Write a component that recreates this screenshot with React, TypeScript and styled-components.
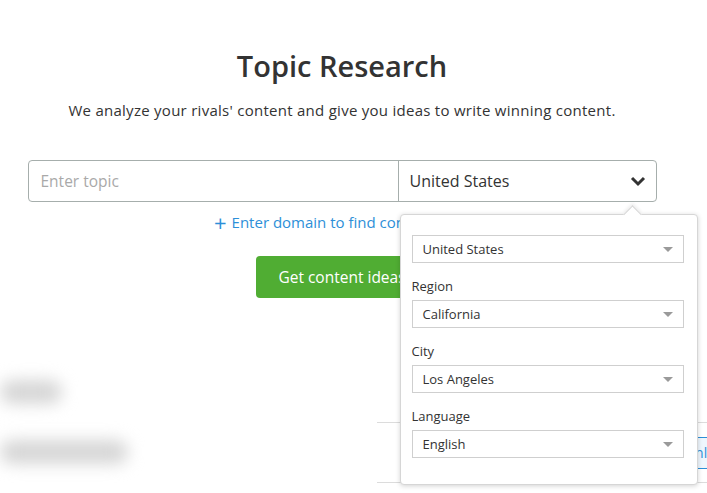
import React from "react";
import styled, { createGlobalStyle } from "styled-components";

const Global = createGlobalStyle`
  html, body { margin: 0; padding: 0; background: #fff; overflow: hidden; }
  body { font-family: "Open Sans", "Noto Sans", Arial, sans-serif; color: #333; }
  * { box-sizing: border-box; }
`;

const Page = styled.div`
  width: 707px;
  height: 493px;
  position: relative;
  overflow: hidden;
`;

const Column = styled.div`
  width: 684px;
  display: flex;
  flex-direction: column;
  align-items: center;
  padding-top: 46px;
`;

const Title = styled.h1`
  margin: 0;
  font-size: 29px;
  line-height: 40px;
  font-weight: 600;
  color: #333;
`;

const Subtitle = styled.p`
  margin: 14px 0 0;
  font-size: 15px;
  line-height: 20px;
  letter-spacing: 0.27px;
  color: #333;
`;

const Group = styled.div`
  margin-top: 40px;
  width: 629px;
  height: 42px;
  display: flex;
  border: 1px solid #a6aeac;
  border-radius: 4px;
  position: relative;
`;

const TopicInput = styled.div`
  flex: 0 0 370px;
  border-right: 1px solid #a6aeac;
  display: flex;
  align-items: center;
  padding-left: 12px;
  font-size: 15.5px;
  color: #a9a9a9;
`;

const CountrySelect = styled.div`
  flex: 1;
  display: flex;
  align-items: center;
  justify-content: space-between;
  padding: 0 10px 0 11px;
  font-size: 16px;
  color: #333;
`;

const Link = styled.div`
  margin-top: 10px;
  font-size: 15px;
  line-height: 20px;
  color: #2d8fd8;
  display: flex;
  align-items: center;
  gap: 5px;
`;

const Plus = styled.span`
  font-size: 22px;
  line-height: 20px;
  font-weight: 400;
`;

const GreenButton = styled.button`
  margin-top: 24px;
  height: 42px;
  padding: 0 22px;
  border: none;
  border-radius: 4px;
  background: #50ad33;
  color: #fff;
  font-family: inherit;
  font-size: 15.5px;
`;

const Results = styled.div`
  margin-top: 72px;
  display: flex;
  justify-content: space-between;
  align-items: flex-start;
`;

const BlurList = styled.div`
  display: flex;
  flex-direction: column;
  gap: 36px;
  padding-top: 10px;
`;

const BlurLine = styled.div<{ $w: number }>`
  width: ${(p) => p.$w}px;
  height: 24px;
  border-radius: 12px;
  background: #d6d6d6;
  filter: blur(8px);
`;

const Toolbar = styled.div`
  width: 330px;
  margin-top: 52px;
  height: 61px;
  border-top: 1px solid #dcdcdc;
  border-bottom: 1px solid #dcdcdc;
  display: flex;
  justify-content: flex-end;
  align-items: center;
  overflow: hidden;
`;

const GhostButton = styled.div`
  flex: 0 0 auto;
  margin-right: -38px;
  height: 32px;
  padding: 0 12px;
  display: flex;
  align-items: center;
  border: 1px solid #2d8fd8;
  background: #eef6fd;
  color: #2d8fd8;
  font-size: 14px;
`;

const Popover = styled.div`
  position: absolute;
  top: 53px;
  right: -42px;
  width: 298px;
  background: #fff;
  border: 1px solid #d6d6d6;
  border-radius: 4px;
  box-shadow: 0 1px 5px rgba(0, 0, 0, 0.18);
  padding: 20px 13px 26px 11px;
  display: flex;
  flex-direction: column;
  z-index: 5;
`;

const Arrow = styled.div`
  position: absolute;
  top: -7px;
  right: 58px;
  width: 13px;
  height: 13px;
  background: #fff;
  border-left: 1px solid #d6d6d6;
  border-top: 1px solid #d6d6d6;
  transform: rotate(45deg);
  box-shadow: -2px -2px 3px rgba(0, 0, 0, 0.06);
`;

const Field = styled.div<{ $first?: boolean }>`
  display: flex;
  flex-direction: column;
  margin-top: ${(p) => (p.$first ? 0 : 15)}px;
`;

const Label = styled.label`
  font-size: 13px;
  line-height: 16px;
  color: #333;
  margin-bottom: 6px;
`;

const SmallSelect = styled.div`
  height: 28px;
  border: 1px solid #cfcfcf;
  display: flex;
  align-items: center;
  justify-content: space-between;
  padding: 0 10px 0 10px;
  font-size: 13px;
  color: #333;
`;

const Caret = styled.span`
  width: 0;
  height: 0;
  border-left: 5px solid transparent;
  border-right: 5px solid transparent;
  border-top: 5px solid #9a9a9a;
`;

const Chevron = () => (
  <svg width="16" height="12" viewBox="0 0 16 12">
    <polyline points="2,3 8,9 14,3" fill="none" stroke="#333" strokeWidth="3" strokeLinejoin="miter" />
  </svg>
);

const fields = [
  { label: "", value: "United States" },
  { label: "Region", value: "California" },
  { label: "City", value: "Los Angeles" },
  { label: "Language", value: "English" },
];

export default function App() {
  return (
    <Page>
      <Global />
      <Column>
        <Title>Topic Research</Title>
        <Subtitle>We analyze your rivals' content and give you ideas to write winning content.</Subtitle>
        <Group>
          <TopicInput>Enter topic</TopicInput>
          <CountrySelect>
            United States
            <Chevron />
          </CountrySelect>
          <Popover>
            <Arrow />
            {fields.map((f, i) => (
              <Field key={i} $first={i === 0}>
                {f.label && <Label>{f.label}</Label>}
                <SmallSelect>
                  {f.value}
                  <Caret />
                </SmallSelect>
              </Field>
            ))}
          </Popover>
        </Group>
        <Link>
          <Plus>+</Plus>Enter domain to find content gaps
        </Link>
        <GreenButton>Get content ideas</GreenButton>
      </Column>
      <Results>
        <BlurList>
          <BlurLine $w={62} />
          <BlurLine $w={128} />
        </BlurList>
        <Toolbar>
          <GhostButton>Download</GhostButton>
        </Toolbar>
      </Results>
    </Page>
  );
}
